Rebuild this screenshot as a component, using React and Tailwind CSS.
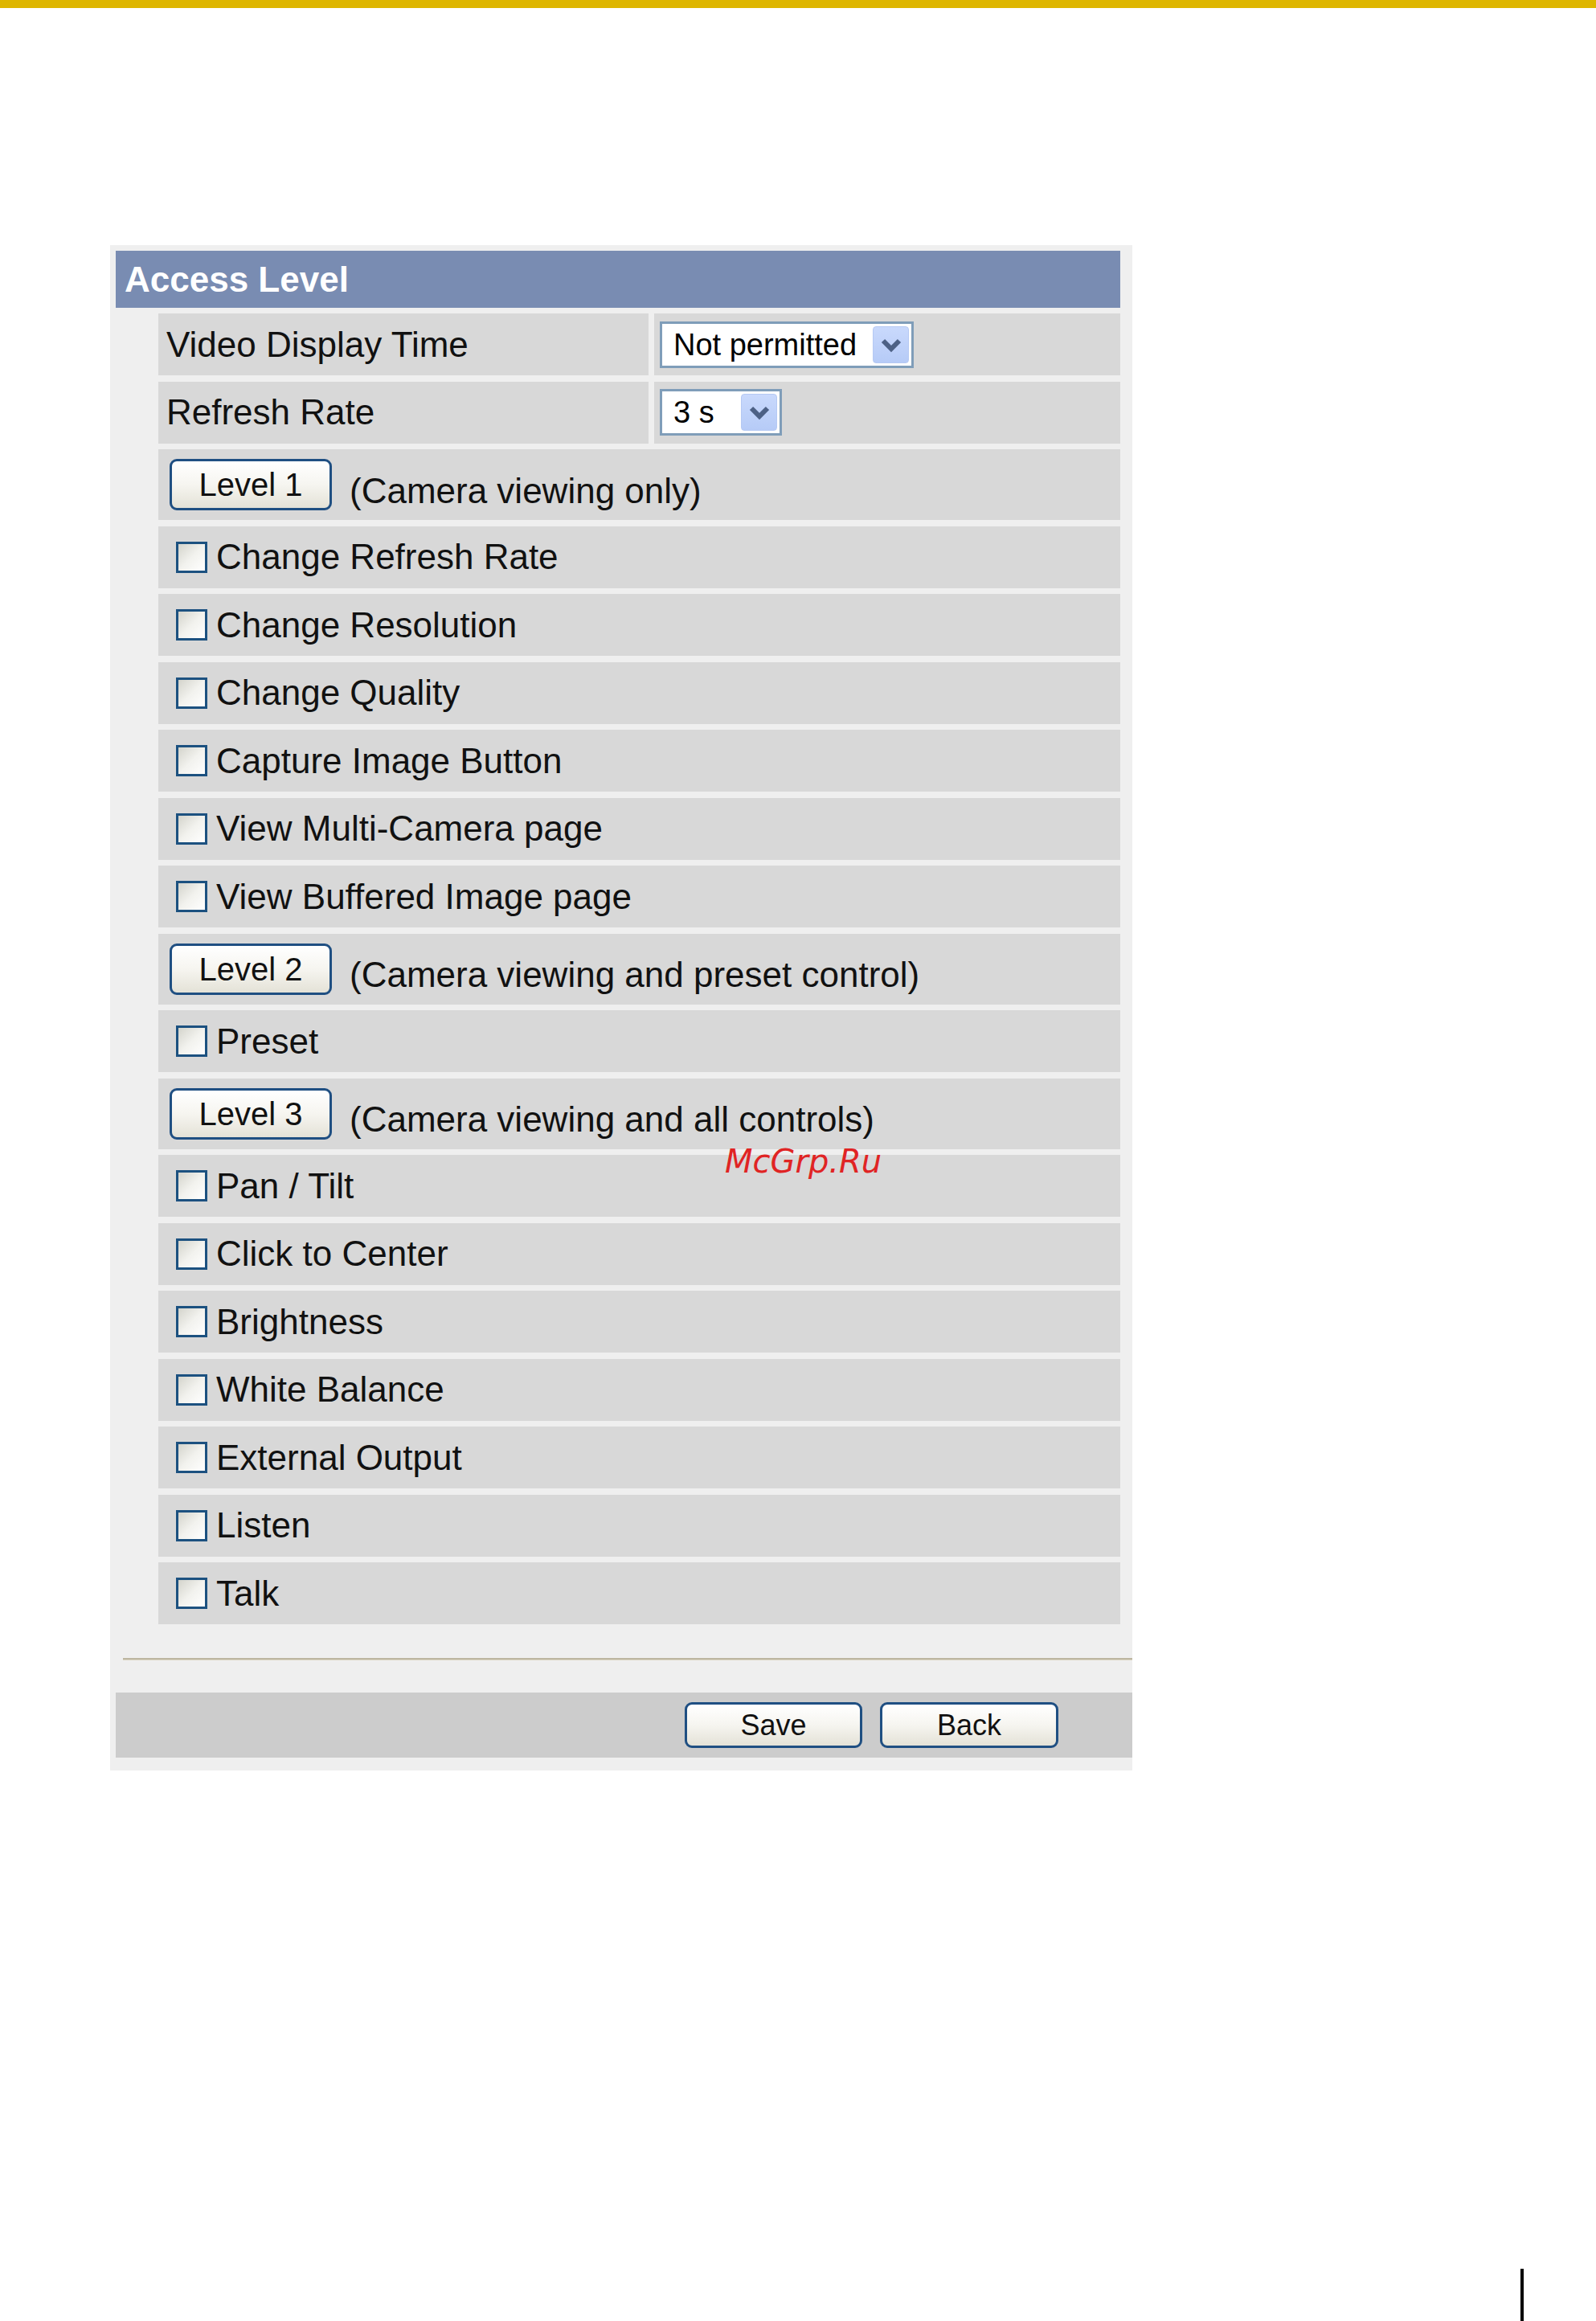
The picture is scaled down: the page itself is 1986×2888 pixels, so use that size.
import React from 'react';

const rows = [
  { type: 'field', label: 'Video Display Time', value: 'Not permitted', width: 'w-[316px]' },
  { type: 'field', label: 'Refresh Rate', value: '3 s', width: 'w-[152px]' },
  { type: 'level', label: 'Level 1', desc: '(Camera viewing only)' },
  { type: 'check', label: 'Change Refresh Rate' },
  { type: 'check', label: 'Change Resolution' },
  { type: 'check', label: 'Change Quality' },
  { type: 'check', label: 'Capture Image Button' },
  { type: 'check', label: 'View Multi-Camera page' },
  { type: 'check', label: 'View Buffered Image page' },
  { type: 'level', label: 'Level 2', desc: '(Camera viewing and preset control)' },
  { type: 'check', label: 'Preset' },
  { type: 'level', label: 'Level 3', desc: '(Camera viewing and all controls)' },
  { type: 'check', label: 'Pan / Tilt' },
  { type: 'check', label: 'Click to Center' },
  { type: 'check', label: 'Brightness' },
  { type: 'check', label: 'White Balance' },
  { type: 'check', label: 'External Output' },
  { type: 'check', label: 'Listen' },
  { type: 'check', label: 'Talk' },
];

const XpButton = ({ children, className }) => (
  <button
    className={`flex items-center justify-center border-[3px] border-[#1f4f82] rounded-[9px] bg-linear-to-b from-white via-[#f6f5f0] to-[#e4e2d7] text-[#111] leading-none ${className}`}
  >
    {children}
  </button>
);

const Select = ({ value, width }) => (
  <div className={`flex items-center justify-between h-[58px] ${width} border-[3px] border-[#7f9db9] bg-white`}>
    <span className="pl-[14px] text-[38px] leading-none text-black">{value}</span>
    <span className="mr-[3px] flex h-[46px] w-[45px] items-center justify-center rounded-[4px] border border-[#b5c9f3] bg-linear-to-b from-[#c9d9fc] to-[#b6cbf7]">
      <svg width="26" height="20" viewBox="0 0 26 20">
        <path d="M3 5 L13 15 L23 5" fill="none" stroke="#4d6185" strokeWidth="6" />
      </svg>
    </span>
  </div>
);

const Checkbox = () => (
  <span className="block h-[39px] w-[39px] shrink-0 border-[3px] border-[#1c5180] bg-linear-to-br from-[#d4d4cc] via-[#f2f2ee] to-white" />
);

const Row = ({ row }) => {
  if (row.type === 'field') {
    return (
      <div className="flex h-[77px] gap-[7px]">
        <div className="flex w-[610px] items-center bg-[#d8d8d8] pl-[10px]">
          <span className="text-[44px] leading-none">{row.label}</span>
        </div>
        <div className="flex flex-1 items-center bg-[#d8d8d8] pl-[7px]">
          <Select value={row.value} width={row.width} />
        </div>
      </div>
    );
  }
  if (row.type === 'level') {
    return (
      <div className="flex h-[88px] items-center bg-[#d8d8d8] pl-[14px]">
        <XpButton className="h-[64px] w-[202px] text-[40px]">{row.label}</XpButton>
        <span className="ml-[22px] mt-[15px] text-[44px] leading-none">{row.desc}</span>
      </div>
    );
  }
  return (
    <div className="flex h-[77px] items-center gap-[11px] bg-[#d8d8d8] pl-[22px]">
      <Checkbox />
      <span className="text-[44px] leading-none">{row.label}</span>
    </div>
  );
};

export default function App() {
  return (
    <div className="min-h-[2888px] bg-white font-['Liberation_Sans',Arial,sans-serif] text-[#111]">
      <div className="h-[10px] bg-[#deb600]" />

      <div className="relative ml-[137px] mt-[295px] w-[1272px] bg-[#efefef] pt-[7px] pb-[16px]">
        <div className="ml-[7px] w-[1250px]">
          {/* Title bar */}
          <div className="flex h-[71px] items-center bg-[#798cb2] pl-[11px]">
            <span className="text-[44px] font-bold leading-none text-white">Access Level</span>
          </div>

          {/* Settings rows */}
          <div className="ml-[53px] mt-[7px] flex flex-col gap-[7.5px]">
            {rows.map((row) => (
              <Row key={row.label} row={row} />
            ))}
          </div>
        </div>

        {/* Separator */}
        <div className="ml-[16px] mt-[42px]">
          <div className="h-[2px] bg-[#bdb6a1]" />
          <div className="h-px bg-[#ddd7c5]" />
        </div>

        {/* Button bar */}
        <div className="ml-[7px] mt-[40px] flex h-[81px] items-center justify-end gap-[22px] bg-[#cccccc] pr-[92px]">
          <XpButton className="h-[57px] w-[221px] text-[36px]">Save</XpButton>
          <XpButton className="h-[57px] w-[222px] text-[36px]">Back</XpButton>
        </div>

        <span className="absolute left-[765px] top-[1120px] font-['DejaVu_Sans',sans-serif] text-[40px] italic leading-none text-[#e02424]">
          McGrp.Ru
        </span>
      </div>

      <div className="ml-[1892px] mt-[620px] h-[65px] w-[4px] bg-black" />
    </div>
  );
}
